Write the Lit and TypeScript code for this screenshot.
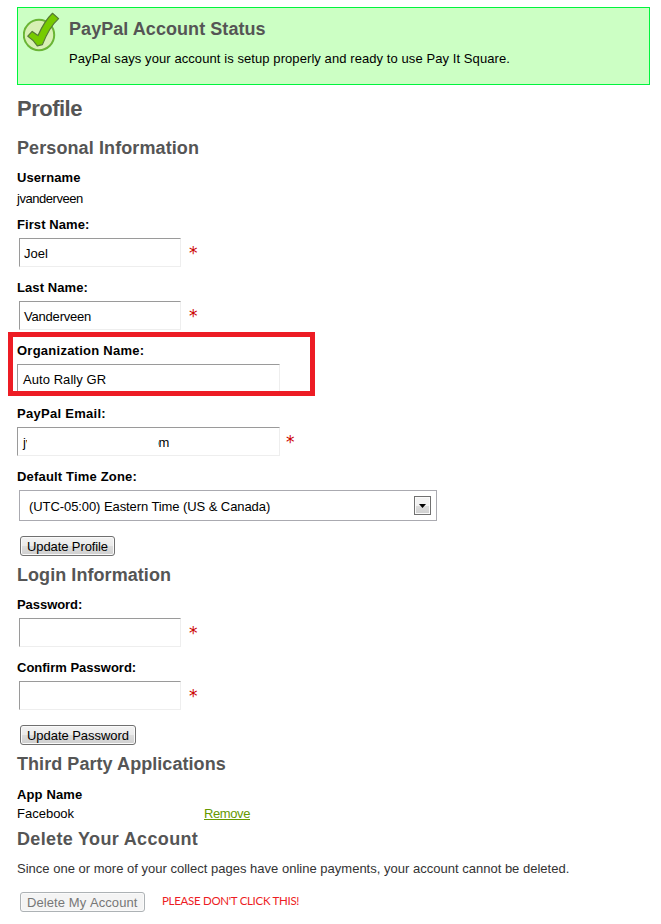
import { LitElement, html, css, nothing } from "lit";
import { customElement, property } from "lit/decorators.js";

@customElement("form-field")
class FormField extends LitElement {
  @property() label = "";
  @property() value = "";
  @property() tail = "";
  @property({ type: Boolean }) required = false;
  @property({ type: Boolean, reflect: true }) wide = false;
  @property({ type: Boolean }) masked = false;

  static styles = css`
    :host { display: block; }
    .label { height: 20px; line-height: 20px; font-weight: bold; letter-spacing: var(--label-spacing, 0.08px); color: #000; white-space: pre; }
    .row { display: flex; margin: 3px 0 0 2px; }
    .box {
      box-sizing: border-box; width: 162px; height: 29px; padding-left: 4px;
      display: flex; line-height: 30px; white-space: pre; letter-spacing: var(--value-spacing, 0);
      border: 1px solid; border-color: #9a9a9a #eee #eee #9a9a9a;
    }
    :host([wide]) .row { margin-left: 0; }
    :host([wide]) .box { width: 263px; padding-left: 5px; }
    .star { margin-left: 8px; color: #c00; font: 17px/31px "DejaVu Sans", sans-serif; height: 29px; }
    :host([wide]) .star { margin-left: 6px; }
    .cover { position: relative; width: 131px; height: 24px; margin: 1px 0 0 -5px; background: #fff; }
    .tail { margin-left: -7px; }
  `;

  render() {
    return html`
      <div class="label">${this.label}</div>
      <div class="row">
        <div class="box">
          ${this.masked
            ? html`<span>${this.value}</span><span class="cover"></span><span class="tail">${this.tail}</span>`
            : html`<span>${this.value}</span>`}
        </div>
        ${this.required ? html`<span class="star">*</span>` : nothing}
      </div>
    `;
  }
}

@customElement("app-root")
class AppRoot extends LitElement {
  static styles = css`
    :host {
      display: block; position: relative; box-sizing: border-box; height: 924px; overflow: hidden;
      padding: 7px 11px 0 17px; background: #fff; color: #000; font-kerning: none;
      font: 13px/20px "Liberation Sans", Arial, sans-serif;
    }
    .status {
      box-sizing: border-box; height: 78px; display: flex;
      border: 1px solid #00f53d; background: #ccffc4; padding: 4px 5px;
    }
    .icon { flex: none; width: 38px; height: 40px; }
    .copy { margin: 5px 0 0 8px; }
    h1, h2, p { margin: 0; white-space: nowrap; }
    h1 { margin-top: 10px; font-size: 22px; line-height: 28px; letter-spacing: -0.5px; color: #555; }
    h2 { font-size: 18px; line-height: 24px; letter-spacing: 0.06px; color: #555; }
    .copy p { margin-top: 8px; letter-spacing: 0.08px; }
    .personal { margin-top: 13px; letter-spacing: 0.1px; }
    .strong { margin-top: 8px; font-weight: bold; letter-spacing: 0.08px; }
    .username { margin-top: 1px; letter-spacing: -0.45px; }
    .first { margin-top: 6px; }
    .next { margin-top: 11px; }
    .last { --value-spacing: -0.2px; }
    .org { --label-spacing: 0.25px; --value-spacing: 0.06px; }
    .email { --label-spacing: 0.28px; }
    .pass { margin-top: 8px; --label-spacing: -0.05px; }
    .confirm { --label-spacing: 0; }
    .zone { margin-top: 11px; font-weight: bold; letter-spacing: 0.18px; }
    .select {
      box-sizing: border-box; width: 418px; height: 31px; margin: 3px 0 0 2px; padding: 0 5px 0 9px;
      display: flex; align-items: center; justify-content: space-between; border: 1px solid #aaaab0;
      letter-spacing: -0.08px;
    }
    .zone-name { padding-top: 2px; }
    .arrow {
      box-sizing: border-box; width: 17px; height: 19px; display: grid; place-items: center;
      border: 1px solid #707070; background: linear-gradient(#f2f2f2 50%, #dcdcdc 50%, #cfcfcf);
      box-shadow: inset 0 0 0 1px #fafafa;
    }
    .btn {
      display: block; box-sizing: border-box; height: 20px; margin: 15px 0 0 3px; padding: 0 0 0 6px; text-align: left;
      border: 1px solid #707070; border-radius: 3px; font: inherit; font-kerning: none; line-height: 19px; color: #000;
      background: linear-gradient(#f2f2f2, #ebebeb 50%, #dddddd 50%, #cfcfcf);
      box-shadow: inset 0 0 0 1px #fafafa; white-space: nowrap;
    }
    .profile { width: 95px; letter-spacing: -0.1px; }
    .password { width: 116px; letter-spacing: -0.05px; }
    .delete { width: 125px; margin-top: 0; color: #777; border-color: #adb2b5; background: #f4f4f4; letter-spacing: 0.08px; }
    .section { margin-top: 7px; }
    .appname { margin-top: 9px; line-height: 19px; font-weight: bold; letter-spacing: 0.14px; }
    .apps { display: grid; grid-template-columns: 187px auto; }
    .remove { color: #690; text-decoration: underline; letter-spacing: -0.4px; }
    .account { margin-top: 3px; letter-spacing: 0.34px; }
    .since { margin-top: 8px; color: #333; letter-spacing: 0.01px; }
    .danger { display: flex; margin-top: 13px; }
    .warning { margin-left: 17px; font: 11.5px/18px Lato, sans-serif; letter-spacing: -0.3px; color: #ed1c24; white-space: nowrap; }
    .highlight {
      position: absolute; left: 8px; top: 332px; box-sizing: border-box; width: 307px; height: 64px;
      border: 5px solid #ed1c24;
    }
  `;

  render() {
    return html`
      <div class="status">
        <svg class="icon" viewBox="0 0 38 40">
          <circle cx="16" cy="23" r="15.2" fill="#d8f0b4" stroke="#6ab535" stroke-width="2"></circle>
          <path d="M4.8 24.2 L9.2 19.4 L15 23.6 C19 14.5 24 6.5 29.5 1.3 L35.6 6.6 C28.5 13 23 23.5 19.4 32.6 L14.3 33.8 C11.5 29.5 8.5 26.5 4.8 24.2 Z"
            fill="#77cb00" stroke="#557a34" stroke-width="1.2" stroke-linejoin="round"></path>
        </svg>
        <div class="copy">
          <h2>PayPal Account Status</h2>
          <p>PayPal says your account is setup properly and ready to use Pay It Square.</p>
        </div>
      </div>
      <h1>Profile</h1>
      <h2 class="personal">Personal Information</h2>
      <div class="strong">Username</div>
      <div class="username">jvanderveen</div>
      <form-field class="first" label="First Name:" value="Joel" required></form-field>
      <form-field class="next last" label="Last Name:" value="Vanderveen" required></form-field>
      <form-field class="next org" label="Organization Name:" value="Auto Rally GR" wide></form-field>
      <form-field class="next email" label="PayPal Email:" value="jv" tail="om" masked wide required></form-field>
      <div class="zone">Default Time Zone:</div>
      <div class="select">
        <span class="zone-name">(UTC-05:00) Eastern Time (US &amp; Canada)</span>
        <span class="arrow"><svg width="7" height="4" viewBox="0 0 7 4"><path d="M0 0h7L3.5 4z"></path></svg></span>
      </div>
      <button class="btn profile">Update Profile</button>
      <h2 class="section">Login Information</h2>
      <form-field class="pass" label="Password:" required></form-field>
      <form-field class="next confirm" label="Confirm Password:" required></form-field>
      <button class="btn password">Update Password</button>
      <h2 class="section">Third Party Applications</h2>
      <div class="appname">App Name</div>
      <div class="apps"><span>Facebook</span><span class="remove">Remove</span></div>
      <h2 class="account">Delete Your Account</h2>
      <p class="since">Since one or more of your collect pages have online payments, your account cannot be deleted.</p>
      <div class="danger">
        <button class="btn delete" disabled>Delete My Account</button>
        <span class="warning">PLEASE DON'T CLICK THIS!</span>
      </div>
      <div class="highlight"></div>
    `;
  }
}
